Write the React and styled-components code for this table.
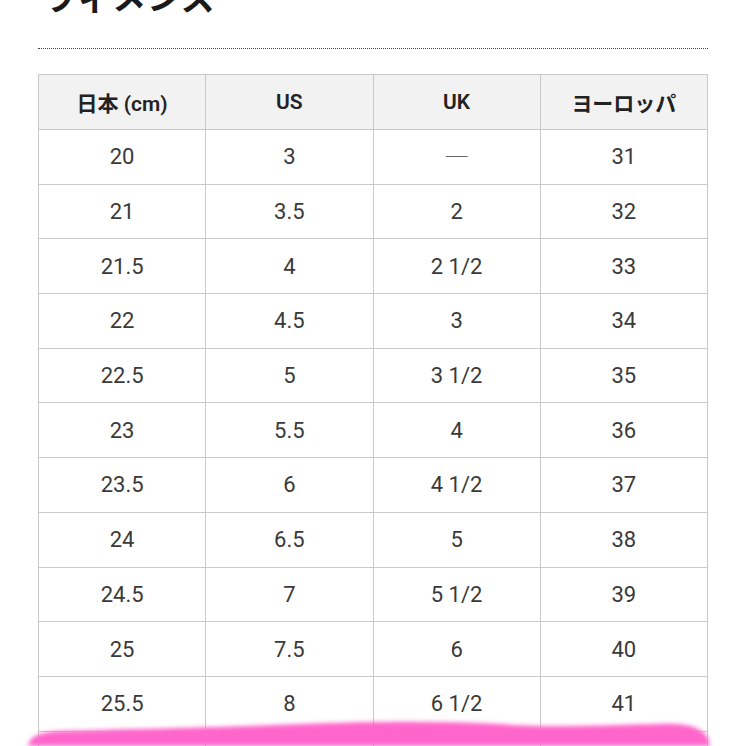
import React from "react";
import styled, { createGlobalStyle } from "styled-components";

const GlobalStyle = createGlobalStyle`
  html, body {
    margin: 0;
    padding: 0;
    background: #fff;
  }
  body {
    font-family: Roboto, "Noto Sans CJK JP", sans-serif;
  }
`;

const sizes = [
  ["20", "3", "—", "31"],
  ["21", "3.5", "2", "32"],
  ["21.5", "4", "2 1/2", "33"],
  ["22", "4.5", "3", "34"],
  ["22.5", "5", "3 1/2", "35"],
  ["23", "5.5", "4", "36"],
  ["23.5", "6", "4 1/2", "37"],
  ["24", "6.5", "5", "38"],
  ["24.5", "7", "5 1/2", "39"],
  ["25", "7.5", "6", "40"],
  ["25.5", "8", "6 1/2", "41"],
  ["26", "8.5", "7", "42"]
];

const App = () => {
  return (
    <Page>
      <GlobalStyle />
      <Title>ウィメンズ</Title>
      <Divider />
      <SizeTable>
        <thead>
          <tr>
            <Head>日本 (cm)</Head>
            <Head>US</Head>
            <Head>UK</Head>
            <Head>ヨーロッパ</Head>
          </tr>
        </thead>
        <tbody>
          {sizes.map((row, idx) => (
            <tr key={idx}>
              {row.map((val, i) => (
                <Cell key={i}>
                  {val === "—" ? <Dash>—</Dash> : val}
                </Cell>
              ))}
            </tr>
          ))}
        </tbody>
      </SizeTable>
      <Marker viewBox="0 0 746 44" preserveAspectRatio="none">
        <defs>
          <filter id="soft" x="-5%" y="-50%" width="110%" height="200%">
            <feGaussianBlur stdDeviation="2" />
          </filter>
        </defs>
        <path
          d="M28 44 C30 34 40 30 60 29 C120 27 200 26 300 22 C380 19 440 19 500 22 C560 26 600 23 660 22 C690 21 702 26 708 36 L710 44 Z"
          fill="#ff66cc"
          filter="url(#soft)"
        />
      </Marker>
    </Page>
  );
};

const Page = styled.div`
  position: relative;
  width: 746px;
  height: 746px;
  overflow: hidden;
  padding: 0 38px;
  box-sizing: border-box;
`;

const Title = styled.h1`
  margin: -21px 0 0 4px;
  font-family: "Noto Sans CJK JP", sans-serif;
  font-size: 34px;
  font-weight: 700;
  line-height: 34px;
  color: #1a1a1a;
  letter-spacing: 1px;
`;

const Divider = styled.div`
  margin-top: 35px;
  border-top: 1px dotted #444;
`;

const SizeTable = styled.table`
  margin-top: 25px;
  width: 670px;
  border-collapse: collapse;
  table-layout: fixed;
`;

const Head = styled.th`
  height: 54px;
  padding: 0;
  background: #f2f2f2;
  border: 1px solid #c9c9c9;
  font-family: Roboto, "Noto Sans CJK JP", sans-serif;
  font-size: 21px;
  font-weight: 600;
  color: #222;
  text-align: center;
`;

const Cell = styled.td`
  height: 53.7px;
  padding: 0;
  border: 1px solid #c9c9c9;
  font-size: 22px;
  font-weight: 400;
  color: #3a3a3a;
  text-align: center;
`;

const Dash = styled.span`
  display: inline-block;
  font-family: "Noto Sans CJK JP", sans-serif;
  font-weight: 300;
  color: #666;
  transform: translateY(-4px) scaleX(1.25);
`;

const Marker = styled.svg`
  position: absolute;
  left: 0;
  bottom: 0;
  width: 746px;
  height: 44px;
  pointer-events: none;
`;

export default App;
